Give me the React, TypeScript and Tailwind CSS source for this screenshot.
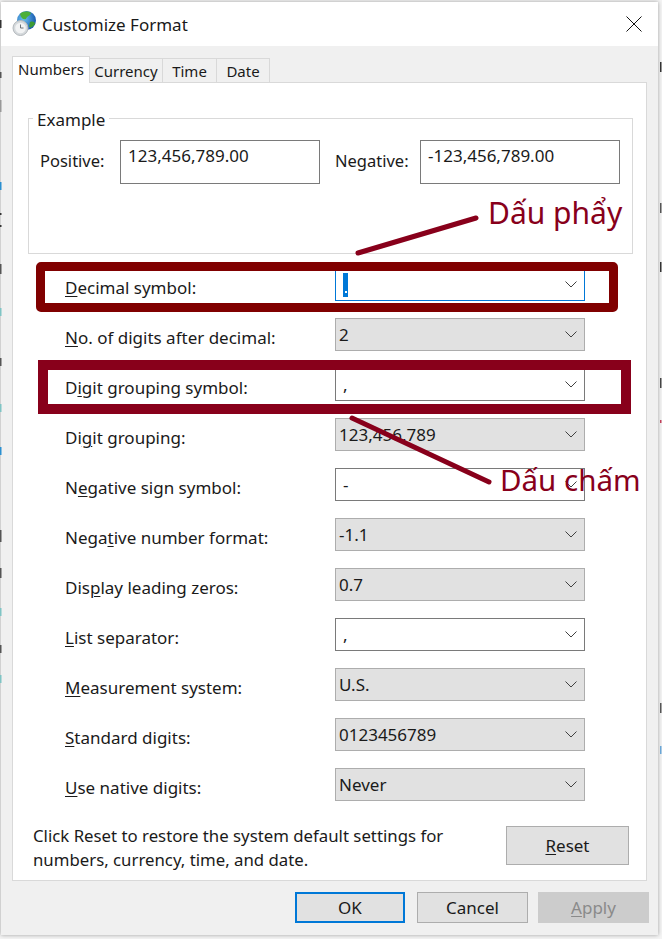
const font = { fontFamily: '"Noto Sans", sans-serif' };

function Chevron() {
  return (
    <svg width="12" height="7" viewBox="0 0 12 7" className="shrink-0">
      <path d="M0.5 0.5 L6 6 L11.5 0.5" fill="none" stroke="#404040" strokeWidth="1" />
    </svg>
  );
}

function AccessLabel({ before, u, after }: { before?: string; u: string; after: string }) {
  return (
    <span className="whitespace-nowrap">
      {before}
      <span className="underline underline-offset-2 decoration-1">{u}</span>
      {after}
    </span>
  );
}

function Combo({ value, kind }: { value: string; kind: 'gray' | 'white' | 'focus' }) {
  const box =
    kind === 'gray'
      ? 'bg-[#e1e1e1] border-[#adadad]'
      : kind === 'focus'
        ? 'bg-white border-[#0078d7]'
        : 'bg-white border-[#7a7a7a]';
  return (
    <div className={`flex h-[33px] w-[250px] items-center justify-between border pl-[3px] pr-[7px] ${box}`}>
      {kind === 'focus' ? (
        <span className="ml-[4px] flex h-[24px] w-[5px] items-end justify-center bg-[#0078d7] pb-[4px]">
          <span className="h-[2px] w-[2px] bg-white" />
        </span>
      ) : kind === 'white' ? (
        <span className="ml-[4px]">{value}</span>
      ) : (
        <span>{value}</span>
      )}
      <Chevron />
    </div>
  );
}

const rows: { label: [string, string, string]; value: string; kind: 'gray' | 'white' | 'focus' }[] = [
  { label: ['', 'D', 'ecimal symbol:'], value: '.', kind: 'focus' },
  { label: ['', 'N', 'o. of digits after decimal:'], value: '2', kind: 'gray' },
  { label: ['D', 'i', 'git grouping symbol:'], value: ',', kind: 'white' },
  { label: ['Di', 'g', 'it grouping:'], value: '123,456,789', kind: 'gray' },
  { label: ['N', 'e', 'gative sign symbol:'], value: '-', kind: 'white' },
  { label: ['Nega', 't', 'ive number format:'], value: '-1.1', kind: 'gray' },
  { label: ['Dis', 'p', 'lay leading zeros:'], value: '0.7', kind: 'gray' },
  { label: ['', 'L', 'ist separator:'], value: ',', kind: 'white' },
  { label: ['', 'M', 'easurement system:'], value: 'U.S.', kind: 'gray' },
  { label: ['', 'S', 'tandard digits:'], value: '0123456789', kind: 'gray' },
  { label: ['', 'U', 'se native digits:'], value: 'Never', kind: 'gray' },
];

function GlobeClock() {
  return (
    <svg width="26" height="26" viewBox="0 0 26 26">
      <defs>
        <radialGradient id="g" cx="35%" cy="40%" r="75%">
          <stop offset="0" stopColor="#6cc4f2" />
          <stop offset="1" stopColor="#0b4aa6" />
        </radialGradient>
      </defs>
      <circle cx="14.5" cy="9.5" r="9.5" fill="url(#g)" />
      <path d="M8 3 C11 0 16 0 19 2 C18 5 15 5 14 8 C11 9 9 7 8 3Z" fill="#4caf3a" />
      <path d="M18 11 C21 10 23 11 23 13 C21 16 19 17 17 16Z" fill="#3d9a35" />
      <circle cx="8.5" cy="17" r="7.5" fill="#d5d9dc" stroke="#b3b8bc" />
      <circle cx="8.5" cy="17" r="5.3" fill="#f2f3f4" />
      <path d="M8.5 13.5 V17 H11.5" fill="none" stroke="#6b7076" strokeWidth="1" />
    </svg>
  );
}

// slivers of the page behind the dialog, cut off at the window edges
const slivers: [number, number, number, string][] = [
  [0, 20, 8, '#333'], [0, 72, 6, '#555'], [0, 100, 12, '#999'], [0, 182, 8, '#2a8fd0'],
  [0, 213, 2, '#333'], [0, 225, 2, '#333'], [0, 264, 10, '#555'], [0, 308, 8, '#7fc4c4'],
  [0, 358, 8, '#555'], [0, 404, 8, '#7fc4c4'], [0, 447, 8, '#2a8fd0'], [0, 530, 12, '#555'],
  [0, 568, 10, '#555'], [0, 608, 8, '#7fc4c4'], [0, 645, 8, '#555'], [0, 675, 8, '#7fc4c4'],
  [660, 62, 10, '#333'], [660, 203, 10, '#555'], [660, 262, 10, '#333'], [660, 378, 10, '#444'],
  [660, 420, 3, '#c0405a'], [660, 703, 10, '#555'], [660, 746, 8, '#6aa6d6'],
];

export default function App() {
  return (
    <div className="relative h-[939px] w-[662px] overflow-hidden bg-[#f4f4f4] text-[17px] text-[#1a1a1a]" style={font}>
      <div className="ml-[1px] mt-[2px] flex h-[933px] w-[657px] flex-col shadow-[0_0_4px_rgba(0,0,0,0.35)]">
        {/* Title bar */}
        <div className="flex h-[44px] items-center bg-white pl-[11px] pr-[16px]">
          <GlobeClock />
          <span className="ml-[4px] mt-[1px] flex-1">Customize Format</span>
          <svg width="16" height="16" viewBox="0 0 16 16">
            <path d="M0.5 0.5 L15.5 15.5 M15.5 0.5 L0.5 15.5" stroke="#111" strokeWidth="1" />
          </svg>
        </div>

        <div className="flex flex-1 flex-col bg-[#f0f0f0] pl-[11px] pr-[9px] pt-[10px]">
          {/* Tabs */}
          <div className="flex h-[26px] items-end text-[15px]">
            <div className="relative z-10 mb-[-1px] flex h-[27px] w-[78px] items-start justify-center border border-b-0 border-[#d9d9d9] bg-white leading-[24px]">Numbers</div>
            <div className="flex h-[24px] w-[73px] items-center justify-center border-r border-t border-[#d9d9d9] pt-[2px]">Currency</div>
            <div className="flex h-[24px] w-[54px] items-center justify-center border-r border-t border-[#d9d9d9] pt-[2px]">Time</div>
            <div className="flex h-[24px] w-[53px] items-center justify-center border-r border-t border-[#d9d9d9] pt-[2px]">Date</div>
          </div>

          {/* Panel */}
          <div className="h-[799px] w-[635px] border border-[#d9d9d9] bg-white pl-[15px] pt-[35px]">
            {/* Example group */}
            <div className="relative h-[136px] w-[605px] border border-[#d9d9d9] pl-[11px] pt-[21px]">
              <span className="absolute left-[4px] top-[-12px] bg-white px-[4px]">Example</span>
              <div className="flex items-start">
                <span className="w-[80px] pt-[9px] text-[16.5px]">Positive:</span>
                <div className="h-[44px] w-[200px] border border-[#7a7a7a] pl-[7px] leading-[30px]">123,456,789.00</div>
                <span className="ml-[15px] w-[85px] pt-[9px] text-[16.5px]">Negative:</span>
                <div className="h-[44px] w-[200px] border border-[#7a7a7a] pl-[7px] leading-[30px]">-123,456,789.00</div>
              </div>
            </div>

            {/* Rows */}
            <div className="mt-[14px] flex flex-col gap-[17px]">
              {rows.map((r) => (
                <div key={r.label.join('')} className="flex h-[33px] items-center pl-[37px]">
                  <span className="w-[270px] pt-[7px]">
                    <AccessLabel before={r.label[0]} u={r.label[1]} after={r.label[2]} />
                  </span>
                  <Combo value={r.value} kind={r.kind} />
                </div>
              ))}
            </div>

            {/* Reset */}
            <div className="mt-[25px] flex items-start">
              <p className="ml-[5px] mt-[-2px] w-[473px] text-[16.8px] leading-[24px]">
                Click Reset to restore the system default settings for numbers, currency, time, and date.
              </p>
              <button className="h-[39px] w-[123px] border border-[#adadad] bg-[#e1e1e1]">
                <AccessLabel u="R" after="eset" />
              </button>
            </div>
          </div>

          {/* Footer buttons */}
          <div className="mt-[11px] flex justify-end pr-[0px]">
            <button className="h-[31px] w-[110px] border-2 border-[#0078d7] bg-[#e1e1e1]">OK</button>
            <button className="ml-[12px] h-[31px] w-[111px] border border-[#adadad] bg-[#e1e1e1]">Cancel</button>
            <button className="ml-[10px] h-[31px] w-[111px] bg-[#cccccc] text-[#8a8a8a]">
              <AccessLabel u="A" after="pply" />
            </button>
          </div>
        </div>
      </div>

      {/* Annotations drawn over the dialog */}
      <div className="absolute left-[36px] top-[262px] h-[50px] w-[582px] rounded-[5px] border-[9px] border-[#800000]" />
      <div className="absolute left-[38px] top-[360px] h-[54px] w-[593px] border-[10px] border-[#88001b]" />
      <svg className="absolute left-0 top-0" width="662" height="939">
        <path d="M358 253 L476 218" stroke="#88001b" strokeWidth="5" strokeLinecap="round" />
        <path d="M352 418 L489 482" stroke="#88001b" strokeWidth="5" strokeLinecap="round" />
        {slivers.map(([x, y, h, c]) => (
          <rect key={`${x}-${y}`} x={x} y={y} width="1.5" height={h} fill={c} />
        ))}
      </svg>
      <span className="absolute left-[488px] top-[191px] text-[30px] leading-[44px] text-[#88001b]">Dấu phẩy</span>
      <span className="absolute left-[500px] top-[458px] text-[29.5px] leading-[44px] text-[#88001b]">Dấu chấm</span>
    </div>
  );
}
